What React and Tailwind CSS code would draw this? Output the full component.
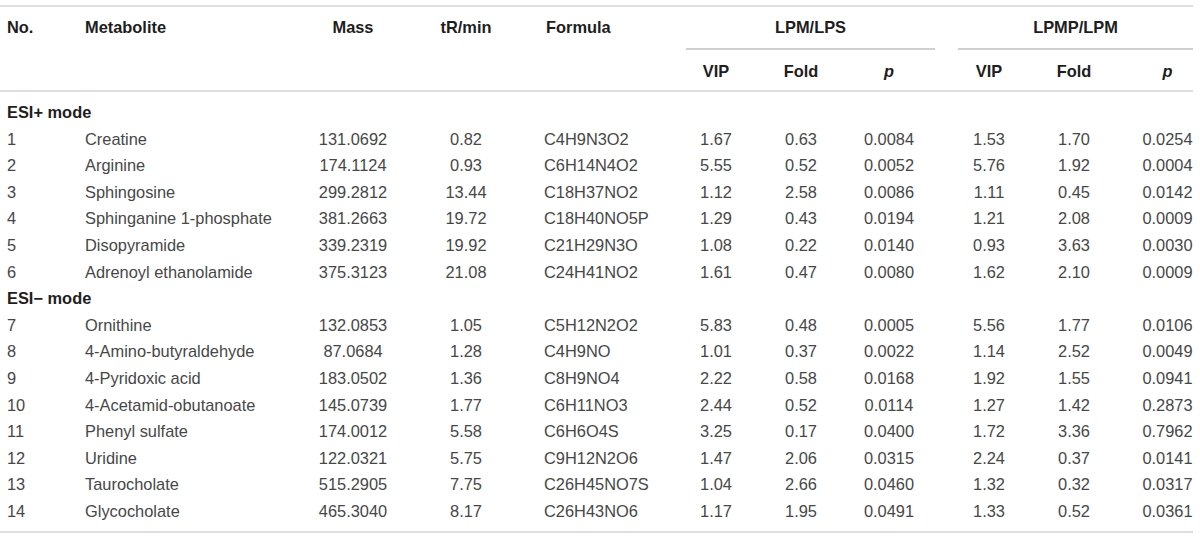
import React from "react";

const groups = [
  {
    label: "ESI+ mode",
    rows: [
      ["1", "Creatine", "131.0692", "0.82", "C4H9N3O2", "1.67", "0.63", "0.0084", "1.53", "1.70", "0.0254"],
      ["2", "Arginine", "174.1124", "0.93", "C6H14N4O2", "5.55", "0.52", "0.0052", "5.76", "1.92", "0.0004"],
      ["3", "Sphingosine", "299.2812", "13.44", "C18H37NO2", "1.12", "2.58", "0.0086", "1.11", "0.45", "0.0142"],
      ["4", "Sphinganine 1-phosphate", "381.2663", "19.72", "C18H40NO5P", "1.29", "0.43", "0.0194", "1.21", "2.08", "0.0009"],
      ["5", "Disopyramide", "339.2319", "19.92", "C21H29N3O", "1.08", "0.22", "0.0140", "0.93", "3.63", "0.0030"],
      ["6", "Adrenoyl ethanolamide", "375.3123", "21.08", "C24H41NO2", "1.61", "0.47", "0.0080", "1.62", "2.10", "0.0009"],
    ],
  },
  {
    label: "ESI\u2212 mode",
    rows: [
      ["7", "Ornithine", "132.0853", "1.05", "C5H12N2O2", "5.83", "0.48", "0.0005", "5.56", "1.77", "0.0106"],
      ["8", "4-Amino-butyraldehyde", "87.0684", "1.28", "C4H9NO", "1.01", "0.37", "0.0022", "1.14", "2.52", "0.0049"],
      ["9", "4-Pyridoxic acid", "183.0502", "1.36", "C8H9NO4", "2.22", "0.58", "0.0168", "1.92", "1.55", "0.0941"],
      ["10", "4-Acetamid-obutanoate", "145.0739", "1.77", "C6H11NO3", "2.44", "0.52", "0.0114", "1.27", "1.42", "0.2873"],
      ["11", "Phenyl sulfate", "174.0012", "5.58", "C6H6O4S", "3.25", "0.17", "0.0400", "1.72", "3.36", "0.7962"],
      ["12", "Uridine", "122.0321", "5.75", "C9H12N2O6", "1.47", "2.06", "0.0315", "2.24", "0.37", "0.0141"],
      ["13", "Taurocholate", "515.2905", "7.75", "C26H45NO7S", "1.04", "2.66", "0.0460", "1.32", "0.32", "0.0317"],
      ["14", "Glycocholate", "465.3040", "8.17", "C26H43NO6", "1.17", "1.95", "0.0491", "1.33", "0.52", "0.0361"],
    ],
  },
];

function DataRow({ r }) {
  return (
    <div className="flex h-[26.6px] items-center text-[#474747] whitespace-nowrap">
      <div className="w-[85px] pl-[7px]">{r[0]}</div>
      <div className="w-[225px]">{r[1]}</div>
      <div className="w-[86px] text-center">{r[2]}</div>
      <div className="w-[140px] text-center">{r[3]}</div>
      <div className="w-[150px] pl-[8px]">{r[4]}</div>
      <div className="w-[60px] text-center">{r[5]}</div>
      <div className="w-[110px] text-center">{r[6]}</div>
      <div className="w-[66px] text-center">{r[7]}</div>
      <div className="w-[36px]"></div>
      <div className="w-[62px] text-center">{r[8]}</div>
      <div className="w-[108px] text-center">{r[9]}</div>
      <div className="w-[65px] pl-[14px] text-center">{r[10]}</div>
    </div>
  );
}

export default function App() {
  return (
    <div
      className="w-[1200px] h-[539px] bg-white pt-[5px] text-[16.4px] leading-none"
      style={{ fontFamily: '"Liberation Sans", Arial, sans-serif' }}
    >
      <div className="w-[1193px] border-t-2 border-[#dedede]">
        {/* header row 1 */}
        <div className="flex h-[43px] font-bold text-[#1e1e1e] whitespace-nowrap">
          <div className="w-[85px] pl-[7px] pb-[3px] flex items-center">No.</div>
          <div className="w-[225px] pb-[3px] flex items-center">Metabolite</div>
          <div className="w-[86px] pb-[3px] flex items-center justify-center">Mass</div>
          <div className="w-[140px] pb-[3px] flex items-center justify-center">tR/min</div>
          <div className="w-[150px] pl-[10px] pb-[3px] flex items-center">Formula</div>
          <div className="w-[249px] pb-[1px] flex items-center justify-center border-b-2 border-[#d0d0d0]">LPM/LPS</div>
          <div className="w-[23px]"></div>
          <div className="w-[235px] pb-[1px] flex items-center justify-center border-b-2 border-[#d0d0d0]">LPMP/LPM</div>
        </div>
        {/* header row 2 */}
        <div className="flex h-[42px] pt-[3px] items-center font-bold text-[#1e1e1e] border-b-2 border-[#dedede] whitespace-nowrap">
          <div className="w-[686px]"></div>
          <div className="w-[60px] text-center">VIP</div>
          <div className="w-[110px] text-center">Fold</div>
          <div className="w-[66px] text-center italic">p</div>
          <div className="w-[36px]"></div>
          <div className="w-[62px] text-center">VIP</div>
          <div className="w-[108px] text-center">Fold</div>
          <div className="w-[65px] pl-[14px] text-center italic">p</div>
        </div>
        {/* body */}
        <div className="pt-[7px] pb-[6px] border-b-2 border-[#dedede]">
          {groups.map((g) => (
            <React.Fragment key={g.label}>
              <div className="flex h-[26.6px] items-center pl-[7px] font-bold text-[#1e1e1e]">{g.label}</div>
              {g.rows.map((r) => (
                <DataRow key={r[0]} r={r} />
              ))}
            </React.Fragment>
          ))}
        </div>
      </div>
    </div>
  );
}
